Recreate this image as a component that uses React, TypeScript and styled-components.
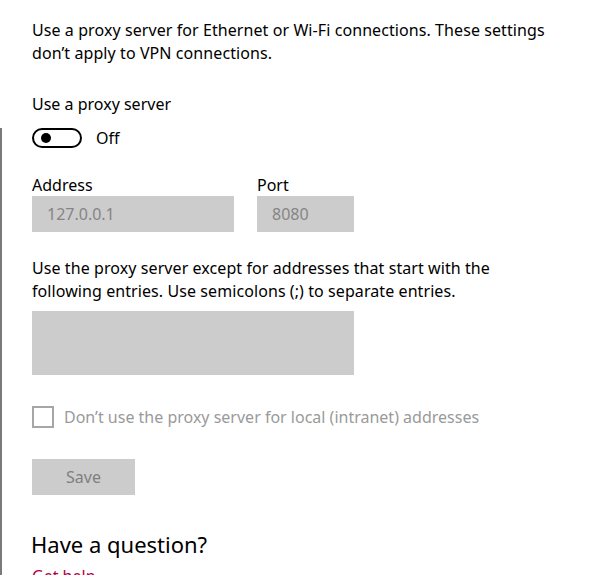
import styled, { createGlobalStyle } from "styled-components";

const GlobalStyle = createGlobalStyle`
  html, body {
    margin: 0;
    padding: 0;
    background: #ffffff;
  }
  body {
    font-family: "Noto Sans", "Open Sans", sans-serif;
    color: #000000;
  }
`;

const Page = styled.div`
  width: 592px;
  height: 575px;
  overflow: hidden;
  position: relative;
  background: #fff;
`;

const EdgeLine = styled.div`
  position: absolute;
  left: 0;
  top: 128px;
  bottom: 0;
  width: 2px;
  background: #7a7a7a;
`;

const Content = styled.div`
  padding: 19px 0 0 32px;
  display: flex;
  flex-direction: column;
`;

const Paragraph = styled.p<{ $gap?: number }>`
  margin: 0 0 ${p => p.$gap ?? 0}px;
  font-size: 16px;
  line-height: 23px;
  width: 520px;
  letter-spacing: 0.08px;
`;

const Label = styled.div`
  font-size: 16px;
  line-height: 22px;
`;

const ToggleRow = styled.div`
  display: flex;
  align-items: center;
  gap: 14px;
  margin-top: 12px;
  margin-bottom: 25px;
`;

const Toggle = styled.div`
  width: 50px;
  height: 20px;
  box-sizing: border-box;
  border: 2px solid #000;
  border-radius: 10px;
  display: flex;
  align-items: center;
  padding-left: 7px;
`;

const Knob = styled.span`
  width: 10px;
  height: 10px;
  border-radius: 50%;
  background: #000;
`;

const FieldRow = styled.div`
  display: flex;
  gap: 23px;
  margin-bottom: 25px;
`;

const Field = styled.div`
  display: flex;
  flex-direction: column;
`;

const Input = styled.div<{ $width: number; $height?: number }>`
  width: ${p => p.$width}px;
  height: ${p => p.$height ?? 36}px;
  background: #cccccc;
  box-sizing: border-box;
  padding: 0 15px;
  display: flex;
  align-items: center;
  font-size: 16px;
  color: #858585;
`;

const CheckRow = styled.label`
  display: flex;
  align-items: center;
  gap: 10px;
  margin-top: 31px;
  font-size: 16px;
  color: #9a9a9a;
`;

const CheckBox = styled.span`
  width: 22px;
  height: 22px;
  box-sizing: border-box;
  border: 2px solid #a6a6a6;
`;

const Button = styled.div`
  margin-top: 31px;
  width: 103px;
  height: 36px;
  background: #cccccc;
  color: #7f7f7f;
  font-size: 16px;
  display: flex;
  align-items: center;
  justify-content: center;
`;

const Heading = styled.h2`
  margin: 34px 0 0 -1px;
  font-size: 22px;
  font-weight: 400;
  line-height: 30px;
`;

const HelpLink = styled.a`
  margin-top: 6px;
  font-size: 16px;
  color: #b4003c;
  text-decoration: none;
`;

export default function App() {
  return (
    <Page>
      <GlobalStyle />
      <EdgeLine />
      <Content>
        <Paragraph $gap={28}>
          Use a proxy server for Ethernet or Wi-Fi connections. These settings
          don’t apply to VPN connections.
        </Paragraph>
        <Label>Use a proxy server</Label>
        <ToggleRow>
          <Toggle>
            <Knob />
          </Toggle>
          <Label>Off</Label>
        </ToggleRow>
        <FieldRow>
          <Field>
            <Label>Address</Label>
            <Input $width={202}>127.0.0.1</Input>
          </Field>
          <Field>
            <Label>Port</Label>
            <Input $width={97}>8080</Input>
          </Field>
        </FieldRow>
        <Paragraph $gap={8}>
          Use the proxy server except for addresses that start with the
          following entries. Use semicolons (;) to separate entries.
        </Paragraph>
        <Input $width={322} $height={64} />
        <CheckRow>
          <CheckBox />
          Don’t use the proxy server for local (intranet) addresses
        </CheckRow>
        <Button>Save</Button>
        <Heading>Have a question?</Heading>
        <HelpLink>Get help</HelpLink>
      </Content>
    </Page>
  );
}
